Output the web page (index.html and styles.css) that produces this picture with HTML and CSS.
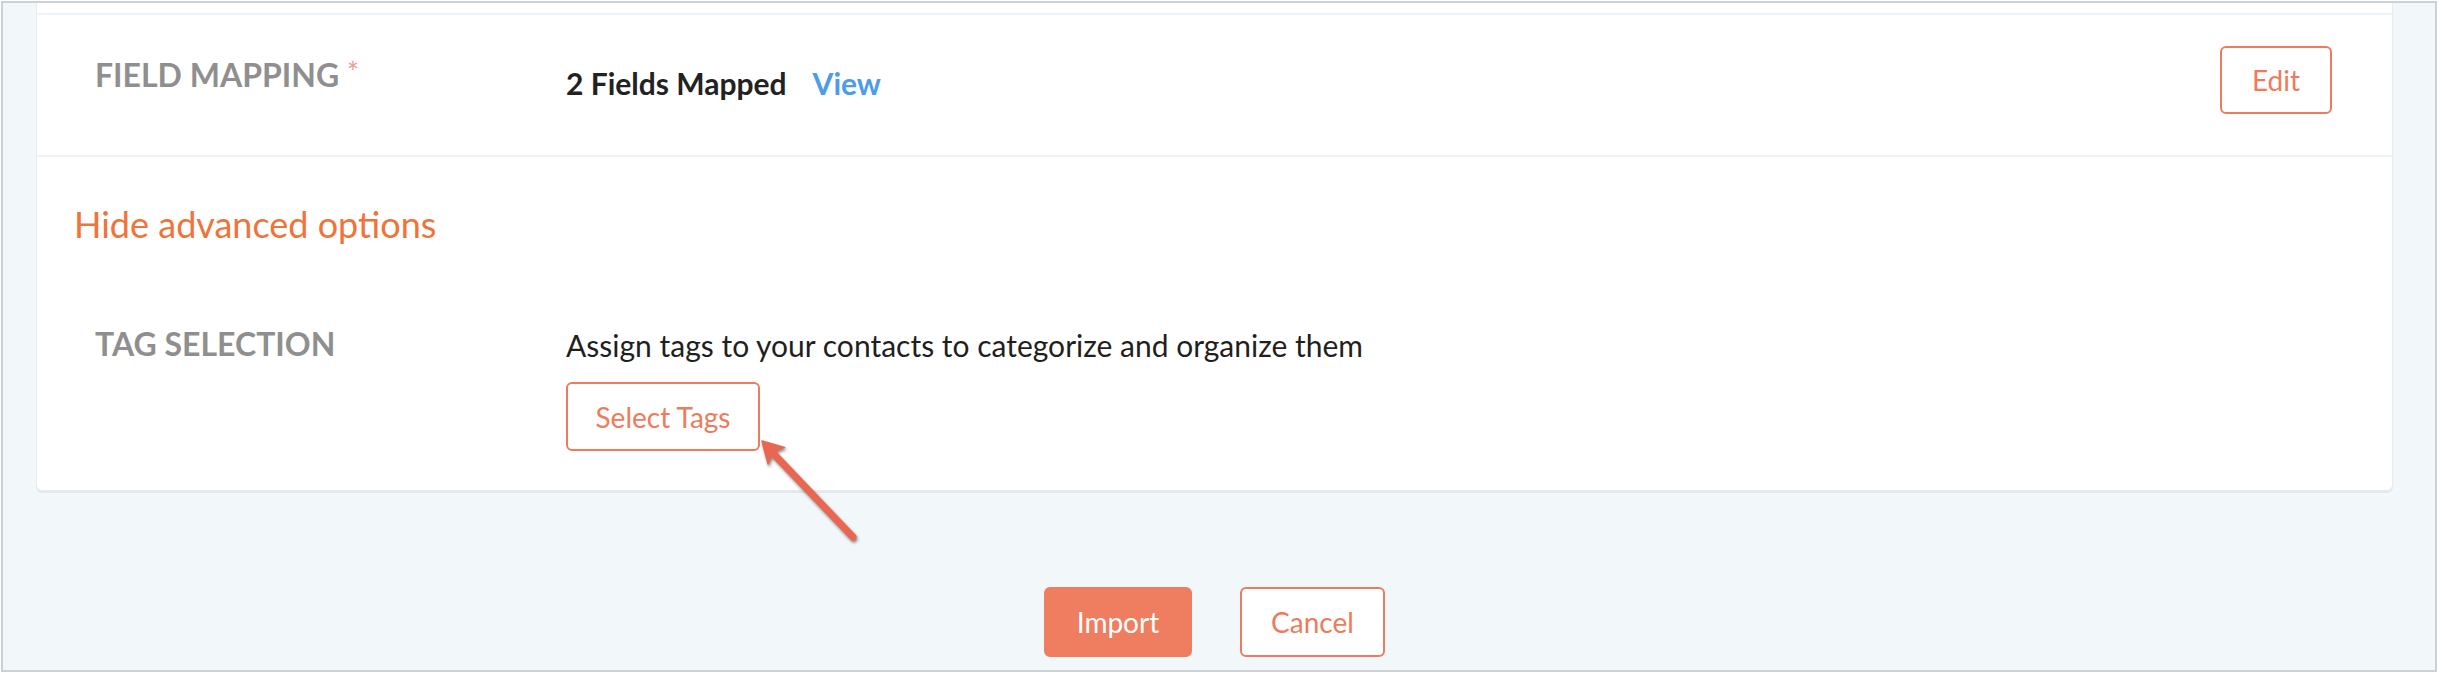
FILE: index.html
```html
<!DOCTYPE html>
<html lang="en">
<head>
    <meta charset="UTF-8">
    <title>Import Contacts</title>
    <link rel="stylesheet" href="styles.css">
</head>
<body>

<div class="frame">
    <div class="card">
        <div class="row row-mapping">
            <div class="row-label">Field Mapping <span class="req">*</span></div>
            <div class="row-value">
                <span class="mapped">2 Fields Mapped</span>
                <a href="#" class="view-link">View</a>
            </div>
            <button type="button" class="btn btn-outline btn-edit">Edit</button>
        </div>

        <div class="advanced">
            <a href="#" class="advanced-toggle">Hide advanced options</a>

            <div class="row row-tags">
                <div class="row-label">Tag Selection</div>
                <div class="row-value stacked">
                    <p class="hint">Assign tags to your contacts to categorize and organize them</p>
                    <button type="button" class="btn btn-outline btn-tags">Select Tags</button>
                </div>
            </div>
        </div>
    </div>

    <div class="actions">
        <button type="button" class="btn btn-primary">Import</button>
        <button type="button" class="btn btn-outline">Cancel</button>
    </div>

    <!-- pointer drawn over the Select Tags button -->
    <svg class="callout-arrow" width="140" height="130" viewBox="0 0 140 130">
        <g fill="#ea6650" stroke="#ea6650">
            <line x1="30" y1="30" x2="113" y2="117" stroke-width="7" stroke-linecap="round"/>
            <polygon points="22,21 44.5,27.5 32.3,31.9 28.2,44" stroke-width="1.5" stroke-linejoin="round"/>
        </g>
    </svg>
</div>

</body>
</html>
```

FILE: styles.css
```css
body {
    margin: 0;
    font-family: Lato, "Open Sans", Arial, sans-serif;
}

.frame {
    position: relative;
    margin: 1px 2px 0 1px;
    padding: 0 42px 13px 33px;
    background-color: #f2f7fa;
    border: 2px solid #ccd1d5;
}

.card {
    background-color: #fff;
    padding-top: 10px;
    border: 1px solid #e7ecf0;
    border-top: none;
    border-radius: 0 0 6px 6px;
    box-shadow: 0 2px 0 #e2e8ec;
}

.row {
    display: flex;
    padding: 0 60px 0 58px;
}

.row-mapping {
    align-items: center;
    padding-top: 31px;
    padding-bottom: 41px;
    border-top: 2px solid #eef3f7;
    border-bottom: 2px solid #eef3f7;
}

.row-label {
    width: 471px;
    flex-shrink: 0;
    align-self: flex-start;
    font-size: 32px;
    font-weight: 700;
    line-height: 1.2;
    color: #8f8f8f;
    text-transform: uppercase;
}

.row-mapping .row-label {
    margin-top: 10px;
}

.req {
    color: #f29b8d;
    font-weight: 400;
    font-size: 28px;
    vertical-align: 4px;
}

.row-value {
    display: flex;
    align-items: center;
    font-size: 30px;
    line-height: 1.2;
}

.row-mapping .row-value {
    margin-top: 6px;
}

.row-value.stacked {
    flex-direction: column;
    align-items: flex-start;
    margin-top: 2px;
}

.mapped {
    font-weight: 700;
    color: #222;
}

.view-link {
    margin-left: 26px;
    font-weight: 700;
    color: #4b9de9;
    text-decoration: none;
}

.advanced {
    padding: 46px 0 39px 0;
}

.advanced-toggle {
    display: block;
    width: fit-content;
    margin-left: 37px;
    font-size: 36px;
    line-height: 1.2;
    color: #f0733a;
    text-decoration: none;
}

.row-tags {
    margin-top: 79px;
}

.hint {
    margin: 0;
    color: #1f1f1f;
}

.btn {
    font-family: inherit;
    font-size: 28px;
    padding: 0;
    white-space: nowrap;
    border-radius: 6px;
    cursor: pointer;
    box-sizing: border-box;
}

.btn-outline {
    background-color: #fff;
    color: #ee7b5c;
    border: 2px solid #ee7b5c;
}

.btn-primary {
    background-color: #ee7e5f;
    color: #fff;
    border: 2px solid #ee7e5f;
}

.btn-edit {
    margin-left: auto;
    width: 112px;
    height: 68px;
}

.btn-tags {
    margin-top: 19px;
    width: 194px;
    height: 69px;
}

.actions {
    display: flex;
    justify-content: center;
    gap: 48px;
    margin-top: 96px;
}

.actions .btn {
    height: 70px;
}

.actions .btn-primary {
    width: 148px;
}

.actions .btn-outline {
    width: 145px;
}

.callout-arrow {
    position: absolute;
    left: 737px;
    top: 417px;
    filter: drop-shadow(1px 2px 1.5px rgba(40, 40, 40, 0.55));
}
```
